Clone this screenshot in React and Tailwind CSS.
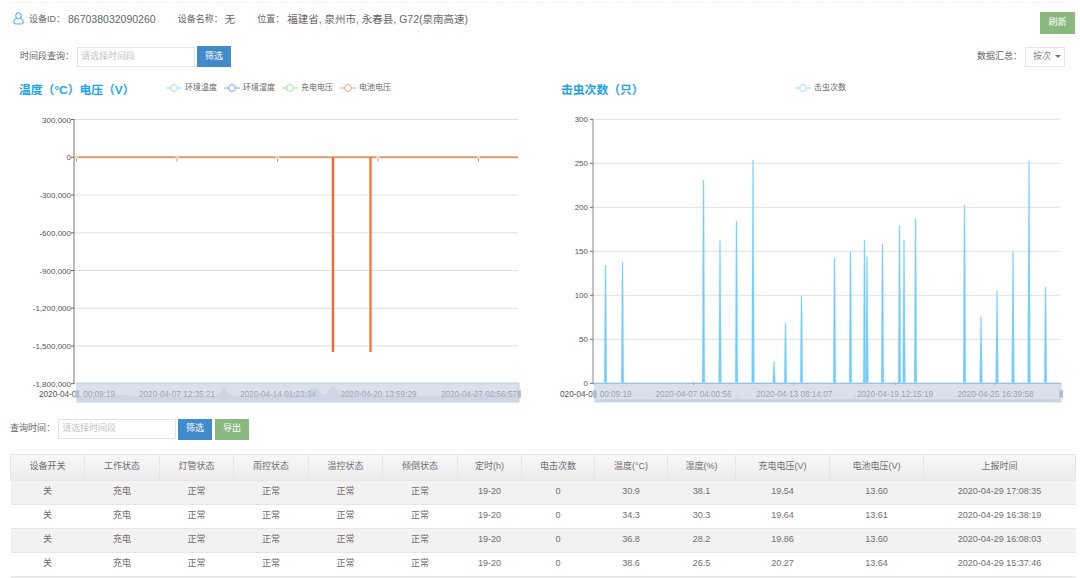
import React from "react";

const FONT = "font-['Liberation_Sans','Noto_Sans_CJK_SC',sans-serif]";
const LBL = "'Liberation Sans','Noto Sans CJK SC',sans-serif";

function LegendItem({ color, label }) {
  return (
    <div className="flex items-center gap-[3px]">
      <svg width="16" height="10" viewBox="0 0 16 10">
        <path d="M0 5H16" stroke={color} strokeWidth="1" />
        <circle cx="8" cy="5" r="3.4" fill="#fff" stroke={color} strokeWidth="1" />
      </svg>
      <span className="text-[8px] leading-none text-[#666]">{label}</span>
    </div>
  );
}

function Slider({ x0, x1, wave, lines }) {
  const y0 = 278, y1 = 297;
  return (
    <g>
      <rect x={x0} y={y0} width={x1 - x0} height={y1 - y0} fill="#c5cfdf" fillOpacity="0.62" />
      {wave && <path d={wave} fill="#b9c4d4" fillOpacity="0.38" />}
      {lines && lines.map((x) => <path key={x} d={`M${x} ${y0 + 12}V${y1 - 3}`} stroke="#bcc7d8" strokeWidth="0.6" />)}
      {lines && <rect x={x0} y={y1 - 3} width={x1 - x0} height="3" fill="#bcc7d8" fillOpacity="0.45" />}
      <rect x={x0} y={y0} width={x1 - x0} height={y1 - y0} fill="none" stroke="#c8d4e5" strokeWidth="1" />
      <rect x={x0 - 2} y={y0 + 7} width="4" height="8" fill="#a9bcd8" stroke="#dfe6f0" strokeWidth="0.5" />
      <rect x={x1 - 2} y={y0 + 7} width="4" height="8" fill="#a9bcd8" stroke="#dfe6f0" strokeWidth="0.5" />
    </g>
  );
}

/* chart svgs start at y=105; ys below are page y minus 105 */
function LeftChart() {
  const ys = [
    ["300,000", 14.5], ["0", 52.3], ["-300,000", 90], ["-600,000", 127.8],
    ["-900,000", 165.5], ["-1,200,000", 203.2], ["-1,500,000", 241], ["-1,800,000", 278.7],
  ];
  const wave =
    "M77 297V291C100 291 110 292 120 290C126 289 130 292 136 291C150 291 170 292 205 291C215 291 218 291 221 287C223 281 225 281 227 287C229 291 235 291 250 291C270 290 280 290 290 288C296 287 300 291 306 289C312 282 316 281 320 287C324 291 327 291 329 285C332 279 335 280 338 287C341 291 343 288 347 285C351 284 354 290 358 288C362 284 366 285 370 289C380 291 400 291 420 291C440 292 455 290 470 289C480 286 484 290 490 287C495 285 500 290 505 288C510 285 515 290 519 290V297Z";
  return (
    <svg width="540" height="300" viewBox="0 0 540 300" className="block shrink-0">
      {ys.map(([l, y]) => (
        <g key={l}>
          <path d={`M74 ${y}H518`} stroke="#e0e0e0" strokeWidth="1" />
          <path d={`M71 ${y}H74`} stroke="#666" strokeWidth="1" />
          <text x="71" y={y + 3} textAnchor="end" fontSize="8" fill="#555" fontFamily={LBL}>{l}</text>
        </g>
      ))}
      <path d="M74 14V279" stroke="#777" strokeWidth="1" />
      {[
        [77, "2020-04-01 00:09:19"], [177, "2020-04-07 12:35:21"], [278, "2020-04-14 01:23:34"],
        [378.5, "2020-04-20 13:59:29"], [479, "2020-04-27 02:56:57"],
      ].map(([x, t]) => (
        <text key={t} x={x} y="292" textAnchor="middle" fontSize="8.2" fill="#555" fontFamily={LBL}>{t}</text>
      ))}
      <path d="M77 52.3H518" stroke="#df9a6e" strokeWidth="2" />
      {[76.5, 177, 277.5, 378, 478.5].map((x) => (
        <g key={x}>
          <path d={`M${x} 53V56.5`} stroke="#999" strokeWidth="1" />
          <circle cx={x} cy="52.3" r="1.8" fill="#f5d3ba" />
        </g>
      ))}
      <path d="M333 52V247" stroke="#f56a2a" strokeWidth="2.4" />
      <path d="M370.5 52V247" stroke="#f57a3a" strokeWidth="2.4" />
      <Slider x0={77} x1={519} wave={wave} />
    </svg>
  );
}

const SPIKES = [
  [605.5, 265], [622.5, 262], [703.5, 180], [720, 240.7], [736.5, 221], [753, 160], [774, 361.7], [785.5, 323],
  [801.5, 296], [834.5, 258], [850.5, 251.7], [864.5, 240], [867, 256.7], [882.5, 244], [899.5, 225.7], [904, 240],
  [915.5, 218.7], [964.5, 205], [981, 316.7], [997, 291], [1013, 251.7], [1029, 160.7], [1045.5, 287],
];

function RightChart() {
  const X = 560; // page x of svg's left edge
  const ys = [["300", 14.3], ["250", 58.3], ["200", 102.3], ["150", 146.3], ["100", 190.3], ["50", 234.3], ["0", 278.3]];
  return (
    <svg width="520" height="300" viewBox="0 0 520 300" className="block shrink-0">
      {ys.map(([l, y]) => (
        <g key={l}>
          <path d={`M${593 - X} ${y}H${1060 - X}`} stroke="#e0e0e0" strokeWidth="1" />
          <path d={`M${590 - X} ${y}H${593 - X}`} stroke="#666" strokeWidth="1" />
          <text x={588 - X} y={y + 3} textAnchor="end" fontSize="8" fill="#555" fontFamily={LBL}>{l}</text>
        </g>
      ))}
      <path d={`M${593 - X} 14V279`} stroke="#888" strokeWidth="1" />
      {[
        [593.5, "2020-04-01 00:09:19"], [693.5, "2020-04-07 04:00:56"], [794.3, "2020-04-13 08:14:07"],
        [895, "2020-04-19 12:15:19"], [995.5, "2020-04-25 16:39:58"],
      ].map(([x, t]) => (
        <text key={t} x={x - X} y="292" textAnchor="middle" fontSize="8.2" fill="#555" fontFamily={LBL}>{t}</text>
      ))}
      {SPIKES.map(([x, top]) => (
        <path
          key={x}
          d={`M${x - 1.4 - X} 278L${x - 0.5 - X} ${top - 105}H${x + 0.5 - X}L${x + 1.4 - X} 278Z`}
          fill="#6fcbfb"
          stroke="#a8e0fd"
          strokeWidth="0.4"
        />
      ))}
      <Slider
        x0={595 - X}
        x1={1061 - X}
        lines={[738, 757, 786, 820, 855, 868, 900, 918, 955, 990, 1000].map((v) => v - X)}
      />
      <path d={`M${593 - X} 278.5H${1061 - X}`} stroke="#8cc6ee" strokeWidth="1" />
      {[594, 693.5, 794, 895, 995.5].map((x) => (
        <path key={x} d={`M${x - X} 277V280`} stroke="#8fbcdc" strokeWidth="1" />
      ))}
    </svg>
  );
}

const COLS = [74, 75, 74, 75, 74, 75, 64, 73, 73, 68, 94, 94, 152];
const HEAD = ["设备开关", "工作状态", "灯管状态", "雨控状态", "温控状态", "倾倒状态", "定时(h)", "电击次数", "温度(°C)", "湿度(%)", "充电电压(V)", "电池电压(V)", "上报时间"];
const ROWS = [
  ["30.9", "38.1", "19.54", "13.60", "2020-04-29 17:08:35"],
  ["34.3", "30.3", "19.64", "13.61", "2020-04-29 16:38:19"],
  ["36.8", "28.2", "19.86", "13.60", "2020-04-29 16:08:03"],
  ["38.6", "26.5", "20.27", "13.64", "2020-04-29 15:37:46"],
];

function Btn({ className, children }) {
  return (
    <button className={`h-[21px] w-[34px] text-[9px] text-white ${className}`}>{children}</button>
  );
}

function DateInput({ className }) {
  return (
    <div className={`flex h-[20px] items-center border border-[#e4e4e4] bg-white pl-[3px] text-[9px] text-[#c4c4c4] ${className}`}>
      请选择时间段
    </div>
  );
}

export default function App() {
  return (
    <div className={`flex h-[578px] w-[1080px] flex-col overflow-hidden bg-white text-[#666] ${FONT}`}>
      <div className="mx-[10px] mt-[2px] h-0 border-t border-dashed border-[#f0f0f0]" />
      {/* info row */}
      <div className="mt-[8px] flex h-[23px] items-start pr-[5px]">
        <div className="flex h-[17px] items-center pl-[13px]">
          <svg width="11" height="13" viewBox="0 0 12 14" fill="none" stroke="#4db4f5" strokeWidth="1.2" className="-mt-[2px] mr-[5px]">
            <ellipse cx="6" cy="4" rx="3" ry="3.3" />
            <path d="M3.6 6.6C2 7.3 .8 8.8 .8 10.6C.8 12.2 1.6 13 3 13H9C10.4 13 11.2 12.2 11.2 10.6C11.2 8.8 10 7.3 8.4 6.6" />
          </svg>
          <span className="text-[9px]">设备ID：</span>
          <span className="ml-[3px] text-[10.5px]">867038032090260</span>
          <span className="ml-[22px] text-[9px]">设备名称：</span>
          <span className="ml-[2px] text-[10.5px]">无</span>
          <span className="ml-[22px] text-[9px]">位置：</span>
          <span className="ml-[3px] text-[10.5px]">福建省, 泉州市, 永春县, G72(泉南高速)</span>
        </div>
        <button className="ml-auto mt-[1px] h-[22px] w-[35px] bg-[#8ab97f] text-[9px] text-white">刷新</button>
      </div>
      {/* filter row */}
      <div className="mt-[12px] flex h-[21px] items-center pl-[20px] pr-[15px]">
        <span className="w-[57px] text-[9px]">时间段查询：</span>
        <DateInput className="w-[118px]" />
        <Btn className="ml-[2px] bg-[#428bca]">筛选</Btn>
        <span className="ml-auto mr-[3px] text-[9px]">数据汇总：</span>
        <div className="flex h-[20px] w-[40px] items-center justify-between border border-[#e4e4e4] pl-[7px] pr-[3px] text-[9px] text-[#888]">
          按次
          <span className="h-0 w-0 border-x-[3.5px] border-t-[3.5px] border-x-transparent border-t-[#777]" />
        </div>
      </div>
      {/* titles */}
      <div className="mt-[15px] flex h-[20px] items-center">
        <div className="flex w-[559px] items-center pl-[19px]">
          <span className="w-[147px] text-[11.8px] font-bold text-[#1ea3f0]">温度（°C）电压（V）</span>
          <div className="-mt-[5px] flex gap-[7px]">
            <LegendItem color="#9fd8f8" label="环境温度" />
            <LegendItem color="#8c9fe8" label="环境湿度" />
            <LegendItem color="#8fe89e" label="充电电压" />
            <LegendItem color="#f5a17f" label="电池电压" />
          </div>
        </div>
        <div className="flex flex-1 items-center pl-[2px]">
          <span className="w-[234px] text-[11.8px] font-bold text-[#1ea3f0]">击虫次数（只）</span>
          <div className="-mt-[5px]">
            <LegendItem color="#9fd8f8" label="击虫次数" />
          </div>
        </div>
      </div>
      {/* charts */}
      <div className="mt-[5px] flex h-[300px]">
        <LeftChart />
        <div className="w-[20px] shrink-0" />
        <RightChart />
      </div>
      {/* query row */}
      <div className="mt-[14px] flex h-[21px] items-center pl-[10px]">
        <span className="w-[48px] text-[9px]">查询时间：</span>
        <DateInput className="w-[118px]" />
        <Btn className="ml-[2px] bg-[#428bca]">筛选</Btn>
        <Btn className="ml-[3px] bg-[#8ab97f]">导出</Btn>
      </div>
      {/* table */}
      <div className="ml-[10px] mt-[14px] w-[1065px]">
        <table className="w-[1065px] table-fixed border-collapse text-center text-[9px] text-[#6f6f6f]">
          <colgroup>
            {COLS.map((w, i) => <col key={i} style={{ width: w }} />)}
          </colgroup>
          <thead>
            <tr className="h-[26px] bg-gradient-to-b from-[#f9f9f9] to-[#ececec]">
              {HEAD.map((h) => (
                <th key={h} className="border border-[#e6e6e6] p-0 font-normal">{h}</th>
              ))}
            </tr>
          </thead>
          <tbody>
            {ROWS.map((r, i) => (
              <tr key={i} className={`h-[24px] ${i % 2 === 0 ? "bg-[#f2f2f2]" : "bg-white"}`}>
                {["关", "充电", "正常", "正常", "正常", "正常", "19-20", "0", ...r].map((c, j) => (
                  <td key={j} className="border-b border-[#e6e6e6] p-0">{c}</td>
                ))}
              </tr>
            ))}
            <tr className="h-[24px] bg-[#f2f2f2]"><td colSpan={13} /></tr>
          </tbody>
        </table>
      </div>
    </div>
  );
}
